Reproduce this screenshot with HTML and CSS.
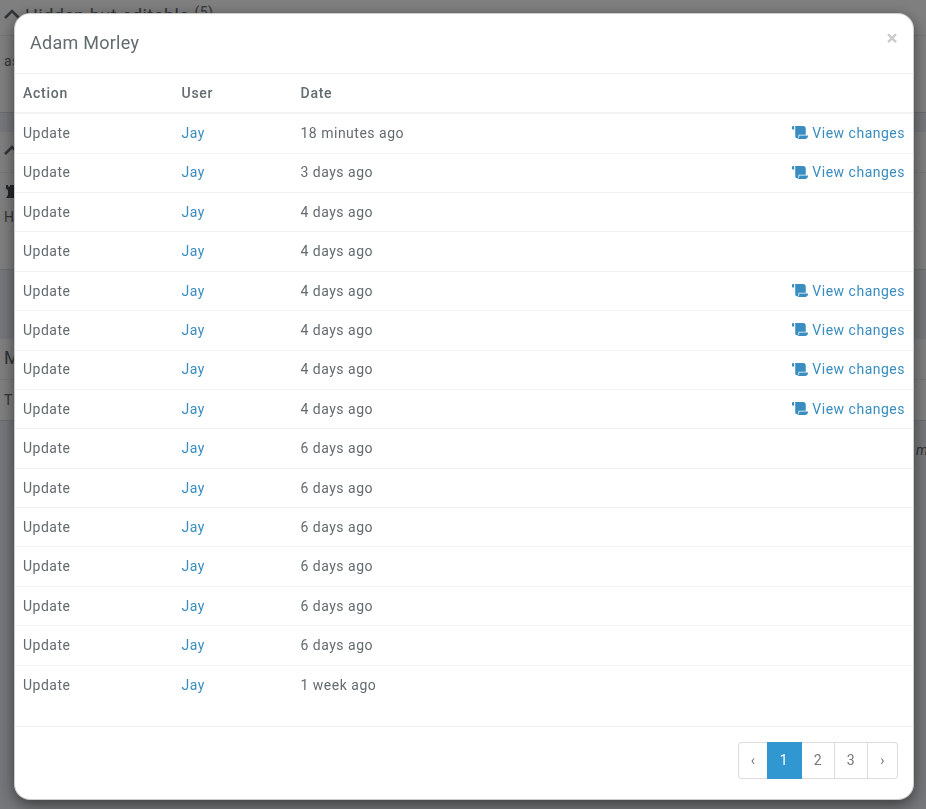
FILE: index.html
```
<!DOCTYPE html>
<html lang="en">
<head>
<meta charset="utf-8">
<title>Adam Morley</title>
<link rel="stylesheet" href="styles.css">
</head>
<body>
<svg class="defs" aria-hidden="true">
  <symbol id="scroll" viewBox="0 0 640 512"><path d="M48 0C21.530 0 0 21.530 0 48v72c0 8.840 7.160 16 16 16h70V48C86 21.530 74 0 48 0zm212 412V346h290V96c0-52.940-43.060-96-96-96H112C124 13.410 130 29.920 130 48v368c0 38.870 34.650 70 74.750 70C240 486 260 444 260 412zM290 378v38c0 52.930-43.060 96-96 96h334c61.860 0 112-50.140 112-118 0-8.840-7.160-16-16-16H290z"/></symbol>
  <symbol id="chevron" viewBox="0 0 16 10"><path d="M1 9L8 2l7 7" fill="none" stroke="currentColor" stroke-width="2.600"/></symbol>
</svg>
<div class="page">
  <section class="panel first">
    <h3><svg class="chev"><use href="#chevron"/></svg>Hidden but editable <sup>(5)</sup></h3>
    <p>as</p>
  </section>
  <section class="panel second">
    <h3><svg class="chev"><use href="#chevron"/></svg></h3>
    <svg class="rook" viewBox="0 0 14 13"><path d="M0 0h2v1.500h2V0h6v1.500h2V0h2v4l-2 1v5l2 3H0l2-3V5L0 4z"/></svg>
    <p>H</p>
  </section>
  <section class="panel third">
    <h3>M</h3>
    <p>T</p>
  </section>
  <div class="note"><em>m</em></div>
</div>
<div class="backdrop"></div>
<div class="modal">
  <header class="modal-header"><h4>Adam Morley</h4><button class="close">×</button></header>
  <div class="table" id="rows">
    <div class="row head"><span>Action</span><span>User</span><span>Date</span><span></span></div>
  </div>
  <footer class="modal-footer">
    <nav class="pages"><a class="edge">‹</a><a class="active">1</a><a>2</a><a>3</a><a class="edge">›</a></nav>
  </footer>
</div>
<script src="script.js"></script>
</body>
</html>
```
FILE: script.js
```
const entries = [
  ['18 minutes ago', true], ['3 days ago', true], ['4 days ago', false], ['4 days ago', false],
  ['4 days ago', true], ['4 days ago', true], ['4 days ago', true], ['4 days ago', true],
  ['6 days ago', false], ['6 days ago', false], ['6 days ago', false], ['6 days ago', false],
  ['6 days ago', false], ['6 days ago', false], ['1 week ago', false]
];
const view = '<a class="view"><svg class="scroll"><use href="#scroll"/></svg>View changes</a>';
document.getElementById('rows').insertAdjacentHTML('beforeend', entries.map(([date, changes]) =>
  `<div class="row"><span>Update</span><span><a>Jay</a></span><span>${date}</span><span class="end">${changes ? view : ''}</span></div>`
).join(''));
```
FILE: styles.css
```
* { box-sizing: border-box; }
html, body { height: 100%; }
body {
  margin: 0;
  overflow: hidden;
  font: 14px/22.4px Roboto, sans-serif;
  letter-spacing: .5px;
  color: #636b6f;
}
h3, h4, p { margin: 0; font-weight: 400; }
a { color: #3a8dc0; }
.defs { position: absolute; width: 0; height: 0; }

.page { height: 809px; background: #ebeff5; color: #636b6f; overflow: hidden; }
.panel { background: #fff; border-bottom: 1px solid #d6d8dc; }
.panel h3 {
  display: flex;
  align-items: center;
  height: 41px;
  padding-left: 4px;
  border-bottom: 1px solid #eee;
  font-size: 18px;
  letter-spacing: .46px;
}
.panel p { padding-left: 4px; }
.first { height: 113px; }
.first h3 { height: 36px; padding-bottom: 3px; }
.first h3 .chev { margin-top: -4px; }
.first h3 sup { margin: -8px 0 0 5px; font-size: 14px; }
.first p { padding-top: 14px; }
.second { height: 138px; margin-top: 19px; }
.second h3 { padding-bottom: 4px; }
.third { height: 82px; margin-top: 69px; }
.third h3 { padding-bottom: 2px; }
.third p { padding-top: 9px; }
.chev { width: 16px; height: 10px; margin-right: 5px; flex: none; }
.rook { display: block; width: 14px; height: 13px; margin: 12px 0 8px 6px; fill: #4b5358; }
.note { padding: 18px 0 0 916px; }

.backdrop { position: fixed; inset: 0; background: rgba(0, 0, 0, .5); }

.modal {
  position: fixed;
  top: 13px;
  left: 14px;
  width: 900px;
  height: 787px;
  display: flex;
  flex-direction: column;
  background: #fff;
  border: 1px solid rgba(0, 0, 0, .2);
  border-radius: 16px;
  box-shadow: 0 5px 15px rgba(0, 0, 0, .5);
}
.modal-header {
  display: flex;
  justify-content: space-between;
  height: 60px;
  padding: 14px 15px;
  border-bottom: 1px solid #f0f0f0;
}
.modal-header h4 { font-size: 18px; line-height: 29px; letter-spacing: .26px; }
.close {
  width: 12px;
  height: 22px;
  margin-top: -1px;
  padding: 0;
  border: 0;
  background: none;
  font: 700 21px/22px Roboto, sans-serif;
  color: #ccc;
}

.row {
  display: grid;
  grid-template-columns: 158.500px 119px 1fr auto;
  height: 39.400px;
  padding: 7.900px 8px 8px;
  border-top: 1px solid #f2f2f2;
}
.row.head { height: 38.400px; padding-top: 8px; border-top: 0; font-weight: 500; letter-spacing: .74px; }
.head + .row { height: 40.200px; padding-top: 7.700px; border-top-width: 2px; }
.view { display: flex; align-items: center; }
.scroll { width: 16px; height: 13px; margin: 0 4.300px 1px 0; fill: currentColor; }

.modal-footer {
  display: flex;
  justify-content: flex-end;
  margin-top: auto;
  height: 73px;
  padding: 15px;
  border-top: 1px solid #f0f0f0;
}
.pages { display: flex; height: 37px; }
.pages a {
  width: 33px;
  padding-top: 6px;
  border: solid #ddd;
  border-width: 1px 1px 1px 0;
  text-align: center;
  color: #777;
}
.pages .edge { width: 30px; }
.pages .edge:first-child { width: 29px; border-left-width: 1px; border-right: 0; border-radius: 4px 0 0 4px; }
.pages .edge:last-child { border-radius: 0 4px 4px 0; }
.pages .active { width: 35px; background: #3097d1; border-color: #3097d1; color: #fff; }
```
